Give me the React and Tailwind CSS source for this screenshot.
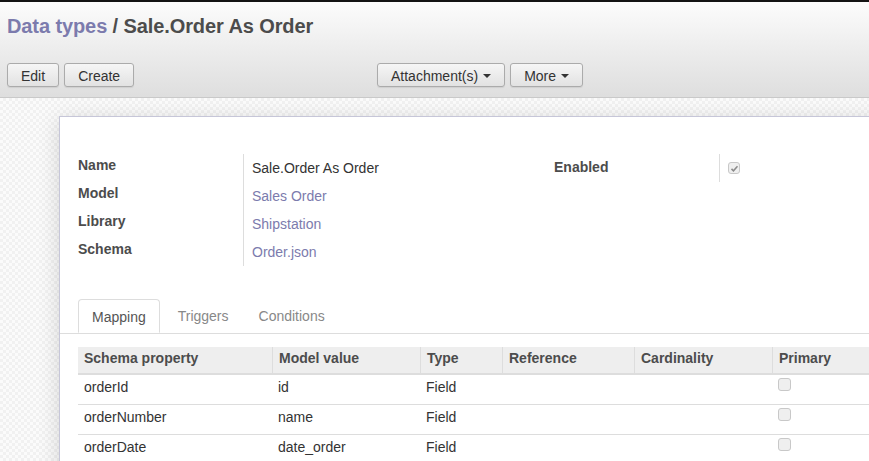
const groupLeft = [
  { label: 'Name', value: 'Sale.Order As Order', link: false },
  { label: 'Model', value: 'Sales Order', link: true },
  { label: 'Library', value: 'Shipstation', link: true },
  { label: 'Schema', value: 'Order.json', link: true },
]

const columns = ['Schema property', 'Model value', 'Type', 'Reference', 'Cardinality', 'Primary']

const rows = [
  { prop: 'orderId', value: 'id', type: 'Field' },
  { prop: 'orderNumber', value: 'name', type: 'Field' },
  { prop: 'orderDate', value: 'date_order', type: 'Field' },
]

function Button({ children, caret }) {
  return (
    <button className="flex h-[24px] items-center gap-[5px] rounded-[3px] border border-[#ababab] bg-linear-to-b from-[#f6f6f6] to-[#e2e2e2] px-[13px] pt-[1px] text-[14px] leading-none text-[#333] shadow-[0_1px_1px_rgba(0,0,0,0.08)]">
      {children}
      {caret && (
        <span className="inline-block h-0 w-0 border-x-[4px] border-t-[4px] border-x-transparent border-t-[#333]" />
      )}
    </button>
  )
}

function Check({ checked, size = 'w-[12px] h-[12px]' }) {
  return (
    <span className={`flex ${size} items-center justify-center rounded-[3px] border border-[#c8c8c8] bg-[#efefef]`}>
      {checked && (
        <svg viewBox="0 0 12 12" className="h-[9px] w-[9px]">
          <path d="M2 6.5l2.6 2.6L10 3" fill="none" stroke="#8a8a8a" strokeWidth="2" />
        </svg>
      )}
    </span>
  )
}

export default function App() {
  return (
    <div className="h-[461px] w-full overflow-hidden bg-white font-['Liberation_Sans',Arial,sans-serif] text-[14px] text-[#4c4c4c]">
      <div className="h-[2px] bg-[#141414]" />

      <div className="h-[96px] border-b border-[#c9c9c9] bg-linear-to-b from-[#fcfcfc] to-[#dedede] px-[7px]">
        <div className="h-[61px] pt-[12px]">
          <h2 className="text-[20px] font-bold leading-6 tracking-[-0.1px]">
            <span className="text-[#7c7bad]">Data types</span>
            <span className="text-[#4c4c4c]"> / Sale.Order As Order</span>
          </h2>
        </div>
        <div className="flex">
          <div className="flex w-[370px] gap-[5px]">
            <Button>Edit</Button>
            <Button>Create</Button>
          </div>
          <div className="flex gap-[5px]">
            <Button caret>Attachment(s)</Button>
            <Button caret>More</Button>
          </div>
        </div>
      </div>

      <div className="h-full bg-[image:repeating-conic-gradient(#f1f1f1_0_25%,#fbfbfb_0_50%)] bg-size-[6px_6px] pl-[59px] pt-[18px]">
        <div className="h-full w-[1000px] border-l border-t border-[#c6c6d8] bg-white shadow-[0_4px_20px_rgba(0,0,0,0.15)]">
          <div className="grid grid-cols-[476px_476px] pl-[18px] pt-[37px]">
            <div className="flex">
              <div className="w-[165px]">
                {groupLeft.map((r) => (
                  <div key={r.label} className="h-[28px] pt-[1px] font-bold leading-5">
                    {r.label}
                  </div>
                ))}
              </div>
              <div className="border-l border-[#dddddd] pl-[8px]">
                {groupLeft.map((r) => (
                  <div
                    key={r.label}
                    className={`h-[28px] pt-[4px] leading-5 ${r.link ? 'text-[#7c7bad]' : 'text-[#333]'}`}
                  >
                    {r.value}
                  </div>
                ))}
              </div>
            </div>
            <div className="flex">
              <div className="w-[165px]">
                <div className="h-[28px] pt-[3px] font-bold leading-5">Enabled</div>
              </div>
              <div className="h-[28px] border-l border-[#dddddd] pl-[8px] pt-[8px]">
                <Check checked />
              </div>
            </div>
          </div>

          <div className="mt-[33px] flex border-b border-[#dddddd] pl-[18px]">
            <div className="-mb-px h-[34px] rounded-t-[4px] border border-b-white border-[#dddddd] bg-white px-[13px] pt-[7px] leading-5 text-[#555]">
              Mapping
            </div>
            <div className="ml-[3px] h-[34px] px-[15px] pt-[7px] leading-5 text-[#888]">Triggers</div>
            <div className="h-[34px] px-[15px] pt-[7px] leading-5 text-[#888]">Conditions</div>
          </div>

          <div className="ml-[18px] mt-[13px]">
            <div className="grid h-[28px] grid-cols-[194px_148px_82px_132px_138px_200px] border-b-2 border-[#dddddd] bg-[#eeeeee] font-bold">
              {columns.map((c, i) => (
                <div
                  key={c}
                  className={`pl-[6px] leading-[22px] ${i > 0 ? 'border-l border-[#dddddd]' : ''}`}
                >
                  {c}
                </div>
              ))}
            </div>
            {rows.map((r, i) => (
              <div
                key={r.prop}
                className={`grid h-[29px] grid-cols-[194px_148px_82px_132px_138px_200px] leading-5 text-[#333] ${i > 0 ? 'h-[30px] border-t border-[#dddddd]' : ''}`}
              >
                <div className="pl-[6px] pt-[2px]">{r.prop}</div>
                <div className="pl-[6px] pt-[2px]">{r.value}</div>
                <div className="pl-[6px] pt-[2px]">{r.type}</div>
                <div />
                <div />
                <div className="pl-[6px] pt-[3px]">
                  <Check size="w-[13px] h-[13px]" />
                </div>
              </div>
            ))}
          </div>
        </div>
      </div>
    </div>
  )
}
